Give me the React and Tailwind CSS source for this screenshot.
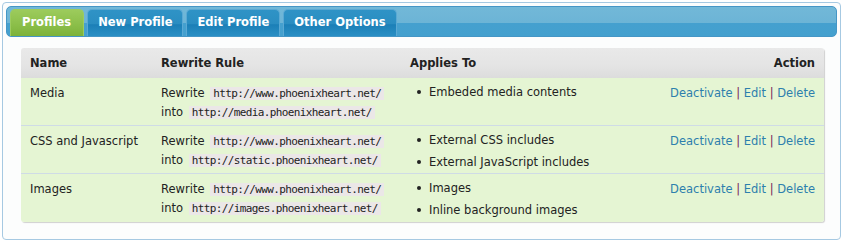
import React from "react";

const rows = [
  {
    name: "Media",
    into: "http://media.phoenixheart.net/",
    applies: ["Embeded media contents"],
  },
  {
    name: "CSS and Javascript",
    into: "http://static.phoenixheart.net/",
    applies: ["External CSS includes", "External JavaScript includes"],
  },
  {
    name: "Images",
    into: "http://images.phoenixheart.net/",
    applies: ["Images", "Inline background images"],
  },
];

const tabs = ["Profiles", "New Profile", "Edit Profile", "Other Options"];

function Code({ children }) {
  return (
    <code className="ml-[2px] bg-[#ebe7e7] px-[3px] font-['DejaVu_Sans_Mono',monospace] text-[11px] tracking-[-0.62px] text-[#222]">
      {children}
    </code>
  );
}

export default function App() {
  return (
    <div className="h-[242px] w-[843px] bg-white p-[2px] font-['DejaVu_Sans',Verdana,sans-serif] text-[11.5px] text-[#222]">
      <div className="h-[238px] rounded-[4px] border border-[#a6c9e2] bg-[#fcfdfd] p-[3px]">
        {/* tab bar */}
        <div className="flex h-[31px] items-end gap-[3px] rounded-[5px] border border-[#4596c6] bg-[linear-gradient(#72b8d8,#6cb4d6_55%,#45a0cf_56%,#44a0ce)] pl-[3px]">
          {tabs.map((t, i) => (
            <div
              key={t}
              className={`flex h-[27px] items-center rounded-t-[5px] border border-b-0 text-[11.5px] font-bold text-white ${
                i === 0
                  ? "border-[#9ccc60] bg-[linear-gradient(#9ccb5c,#8cbf4a_55%,#7cb23a)] pl-[11px] pr-[12px]"
                  : "border-[#5aa9d4] bg-[linear-gradient(#2f93c6,#2a8dc1_55%,#1b7fb7_56%,#2a8fc4)] px-[10px]"
              }`}
            >
              {t}
            </div>
          ))}
        </div>

        {/* table */}
        <div className="ml-[15px] mr-[13px] mt-[11px] rounded-[3px] shadow-[1px_1px_1px_#d0d0d0]">
          <div className="grid h-[30px] grid-cols-[131px_249px_1fr_auto] items-center rounded-t-[3px] bg-[linear-gradient(#e9e9e9,#e4e4e4_60%,#dcdcdc)] pl-[9px] pr-[9px] pt-[1px] font-bold text-[#222]">
            <div>Name</div>
            <div>Rewrite Rule</div>
            <div>Applies To</div>
            <div className="text-right">Action</div>
          </div>
          {rows.map((r, i) => (
            <div
              key={r.name}
              className={`grid h-[48px] grid-cols-[131px_249px_1fr_auto] bg-[#e5f5d3] pl-[9px] pr-[9px] pt-[5px] ${
                i < rows.length - 1 ? "border-b border-[#cfdbe6]" : "rounded-b-[3px]"
              }`}
            >
              <div className="pt-[1px] leading-[19px]">{r.name}</div>
              <div className="pt-[1px] leading-[19px]">
                <div>
                  Rewrite <Code>http://www.phoenixheart.net/</Code>
                </div>
                <div>
                  into <Code>{r.into}</Code>
                </div>
              </div>
              <ul className="-mt-[2px] pl-[7px] leading-[22px]">
                {r.applies.map((a) => (
                  <li key={a} className="flex items-center">
                    <span className="mr-[8px] inline-block h-[4px] w-[4px] rounded-full bg-[#222]" />
                    {a}
                  </li>
                ))}
              </ul>
              <div className="pt-[1px] leading-[19px] text-[#2d7fad]">
                <a href="#">Deactivate</a>
                <span className="text-[#7a1d5a]"> | </span>
                <a href="#">Edit</a>
                <span className="text-[#7a1d5a]"> | </span>
                <a href="#">Delete</a>
              </div>
            </div>
          ))}
        </div>
      </div>
    </div>
  );
}
